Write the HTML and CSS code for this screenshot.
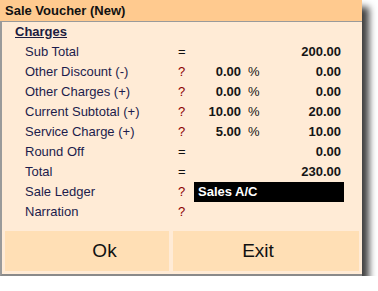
FILE: index.html
```html
<!DOCTYPE html>
<html lang="en">
<head>
  <meta charset="UTF-8" />
  <title>Sale Voucher (New)</title>
  <link rel="stylesheet" href="styles.css">
</head>
<body>

<div class="ventana">
  <div class="titulo">Sale Voucher (New)</div>
  <div class="cuerpo">
    <div class="seccion">Charges</div>
    <div class="tabla">
      <div class="etq">Sub Total</div><div class="igual">=</div><div class="pct"></div><div class="sim"></div><div class="monto">200.00</div>
      <div class="etq">Other Discount (-)</div><div class="preg">?</div><div class="pct">0.00</div><div class="sim">%</div><div class="monto">0.00</div>
      <div class="etq">Other Charges (+)</div><div class="preg">?</div><div class="pct">0.00</div><div class="sim">%</div><div class="monto">0.00</div>
      <div class="etq">Current Subtotal (+)</div><div class="preg">?</div><div class="pct">10.00</div><div class="sim">%</div><div class="monto">20.00</div>
      <div class="etq">Service Charge (+)</div><div class="preg">?</div><div class="pct">5.00</div><div class="sim">%</div><div class="monto">10.00</div>
      <div class="etq">Round Off</div><div class="igual">=</div><div class="pct"></div><div class="sim"></div><div class="monto">0.00</div>
      <div class="etq">Total</div><div class="igual">=</div><div class="pct"></div><div class="sim"></div><div class="monto">230.00</div>
      <div class="etq">Sale Ledger</div><div class="preg">?</div><div class="ledger">Sales A/C</div>
      <div class="etq">Narration</div><div class="preg">?</div><div class="vacio"></div>
    </div>
    <div class="botones">
      <div class="boton ok">Ok</div>
      <div class="boton salir">Exit</div>
    </div>
  </div>
</div>

</body>
</html>
```

FILE: styles.css
```css
* { box-sizing: border-box; }
body {
  margin: 0;
  background: #ffffff;
  font-family: "Liberation Sans", Arial, sans-serif;
  font-size: 13px;
}

.ventana {
  width: 362px;
  background: #ffebd6;
  box-shadow: 7px 7px 7px rgba(0, 0, 0, 0.75);
}

.titulo {
  height: 22px;
  line-height: 21px;
  padding-left: 5px;
  background: #ffca8f;
  border-bottom: 1px solid #9a9a9a;
  font-weight: bold;
  color: #111;
}

.cuerpo {
  border-left: 2px solid #9a9a9a;
  border-bottom: 2px solid #8a8a8a;
  padding-bottom: 3px;
}

.seccion {
  height: 20px;
  line-height: 20px;
  padding-left: 13px;
  font-weight: bold;
  text-decoration: underline;
  color: #1c1c40;
}

.tabla {
  display: grid;
  grid-template-columns: 153px 16px 47px 29px 74px;
  grid-auto-rows: 20px;
  line-height: 20px;
  padding-left: 23px;
}

.etq { color: #1c1c4c; }
.igual { color: #111; }
.preg { color: #8a0000; }

.pct, .monto {
  text-align: right;
  font-weight: bold;
  color: #151515;
}

.sim {
  padding-left: 7px;
  color: #151515;
}

.monto { padding-right: 3px; }

.ledger {
  grid-column: 3 / 6;
  background: #000;
  color: #fff;
  font-weight: bold;
  padding-left: 4px;
}

.vacio { grid-column: 3 / 6; }

.botones {
  display: flex;
  gap: 4px;
  margin-top: 9px;
  padding-left: 3px;
}

.boton {
  height: 40px;
  line-height: 40px;
  background: #ffdfb5;
  font-size: 19px;
  color: #111;
  text-align: center;
}

.ok {
  width: 164px;
  padding-left: 35px;
}

.salir {
  width: 186px;
  padding-right: 16px;
}
```
